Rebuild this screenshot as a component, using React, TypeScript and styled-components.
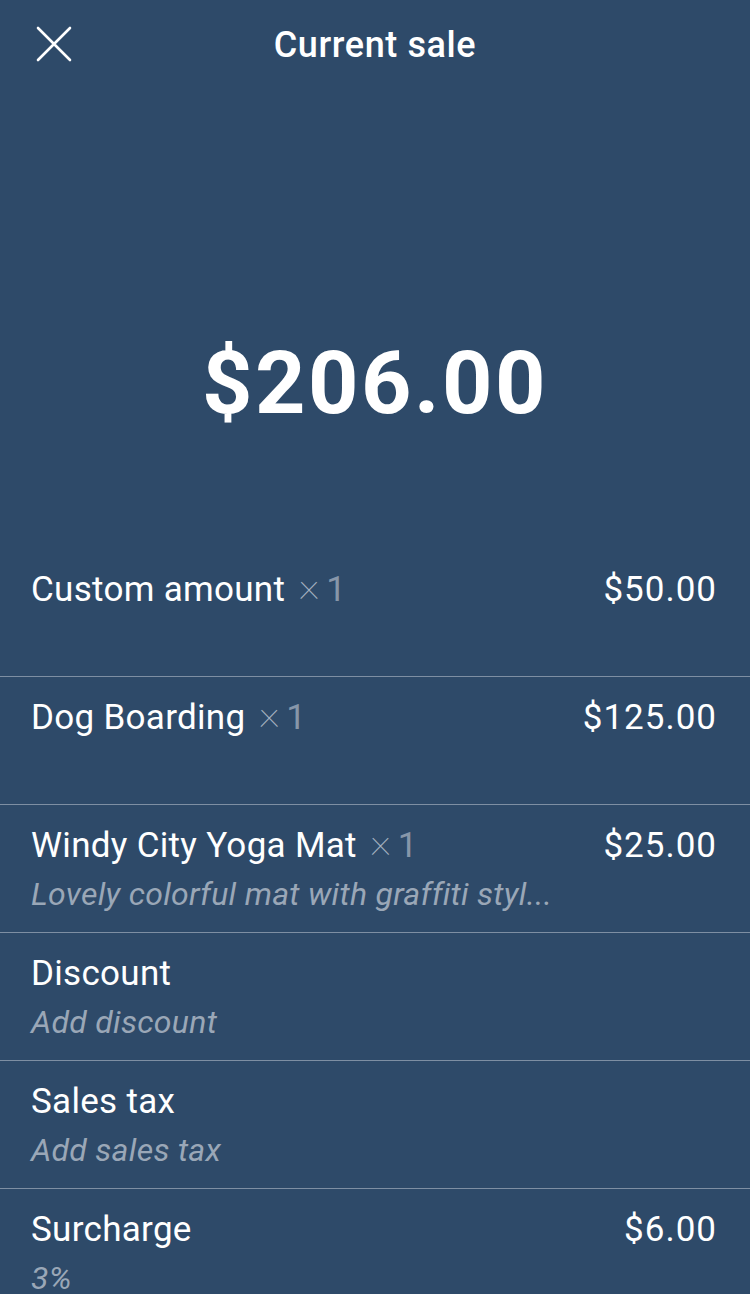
import * as React from "react";
import styled, { createGlobalStyle } from "styled-components";

const GlobalStyle = createGlobalStyle`
  html, body {
    margin: 0;
    padding: 0;
    background: #2e4a69;
  }
  body {
    font-family: Roboto, "Liberation Sans", sans-serif;
    color: #ffffff;
  }
`;

type LineItem = {
  name: string;
  quantity?: number;
  price?: string;
  note?: string;
};

const items: LineItem[] = [
  { name: "Custom amount", quantity: 1, price: "$50.00" },
  { name: "Dog Boarding", quantity: 1, price: "$125.00" },
  {
    name: "Windy City Yoga Mat",
    quantity: 1,
    price: "$25.00",
    note: "Lovely colorful mat with graffiti styl...",
  },
  { name: "Discount", note: "Add discount" },
  { name: "Sales tax", note: "Add sales tax" },
  { name: "Surcharge", price: "$6.00", note: "3%" },
];

const Screen = styled.main`
  width: 750px;
  height: 1294px;
  overflow: hidden;
  background: #2e4a69;
  display: flex;
  flex-direction: column;

  & > * {
    flex-shrink: 0;
  }
`;

const Header = styled.header`
  height: 89px;
  display: grid;
  grid-template-columns: 108px 1fr 108px;
  align-items: center;
`;

const CloseButton = styled.button`
  width: 36px;
  height: 36px;
  margin-left: 36px;
  margin-top: -2px;
  padding: 0;
  border: none;
  background: none;
  color: #ffffff;
  display: flex;
  align-items: center;
  justify-content: center;
`;

const Title = styled.h1`
  margin: 0;
  text-align: center;
  font-size: 36px;
  font-weight: 500;
  letter-spacing: 0.6px;
`;

const Total = styled.div`
  height: 460px;
  display: flex;
  align-items: center;
  justify-content: center;
  padding-top: 126px;
  box-sizing: border-box;
  font-size: 88px;
  font-weight: 700;
  letter-spacing: 2.5px;
`;

const List = styled.ul`
  list-style: none;
  margin: 0;
  padding: 0;
`;

const Row = styled.li`
  height: 128px;
  box-sizing: border-box;
  padding: 18px 33px 0 31px;
  border-bottom: 1px solid #7e8fa3;
  display: flex;
  flex-direction: column;
  gap: 2px;
`;

const TopLine = styled.div`
  display: flex;
  justify-content: space-between;
  align-items: baseline;
  font-size: 35px;
  line-height: 46px;
  letter-spacing: 0.3px;
`;

const Price = styled.span`
  letter-spacing: 1px;
`;

const Qty = styled.span`
  color: #8796a9;
  margin-left: 13px;
`;

const Times = styled.span`
  display: inline-block;
  font-size: 42px;
  font-weight: 100;
  line-height: 0;
  color: #a3b0bf;
  margin-right: 6px;
  transform: translateY(-2px);
`;

const Note = styled.div`
  font-size: 32px;
  line-height: 46px;
  font-style: italic;
  letter-spacing: 0.3px;
  color: #9aa7b7;
  white-space: nowrap;
`;

const CloseIcon = () => (
  <svg width="36" height="36" viewBox="0 0 36 36" fill="none">
    <path
      d="M2 2 L34 34 M34 2 L2 34"
      stroke="currentColor"
      strokeWidth="2.6"
      strokeLinecap="round"
    />
  </svg>
);

export default function App() {
  return (
    <>
      <GlobalStyle />
      <Screen>
        <Header>
          <CloseButton aria-label="Close">
            <CloseIcon />
          </CloseButton>
          <Title>Current sale</Title>
          <span />
        </Header>
        <Total>$206.00</Total>
        <List>
          {items.map((item) => (
            <Row key={item.name}>
              <TopLine>
                <span>
                  {item.name}
                  {item.quantity !== undefined && (
                    <Qty>
                      <Times>×</Times>
                      {item.quantity}
                    </Qty>
                  )}
                </span>
                {item.price && <Price>{item.price}</Price>}
              </TopLine>
              {item.note && <Note>{item.note}</Note>}
            </Row>
          ))}
        </List>
      </Screen>
    </>
  );
}
